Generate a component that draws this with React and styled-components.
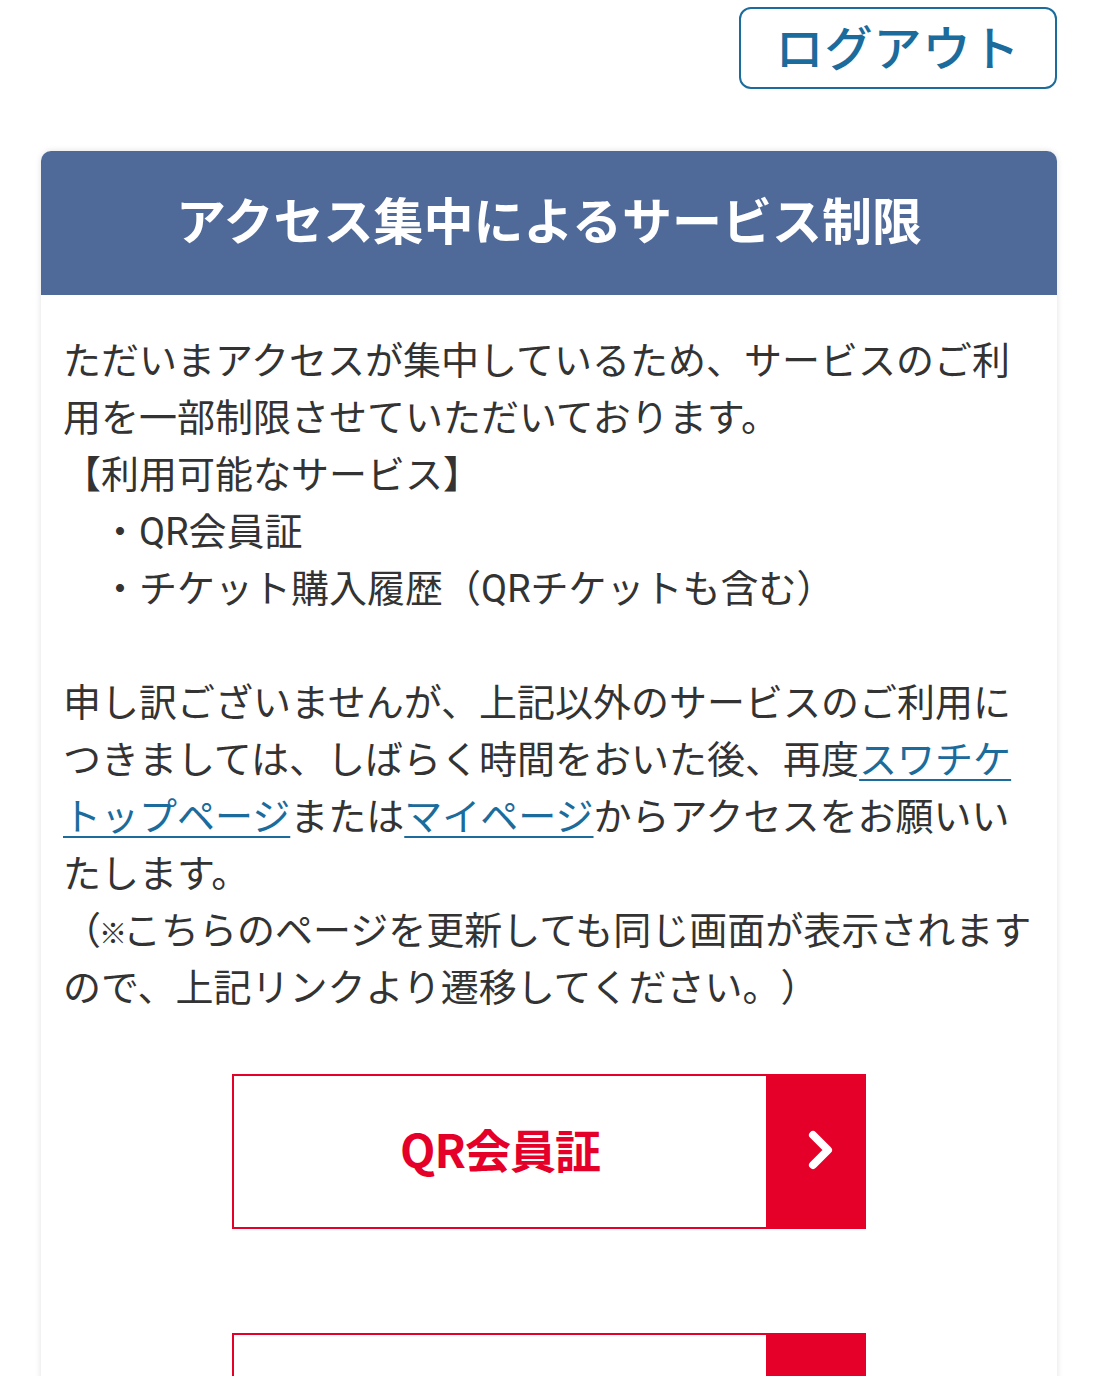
import React from 'react';
import styled, { createGlobalStyle } from 'styled-components';

const GlobalStyle = createGlobalStyle`
  * { box-sizing: border-box; }
  body {
    margin: 0;
    background: #fff;
    font-family: Roboto, "Noto Sans CJK JP", sans-serif;
    color: #333;
  }
`

const Page = styled.div`
  padding: 7px 39px 0 41px;
  height: 1376px;
  overflow: hidden;
`

const TopBar = styled.div`
  display: flex;
  justify-content: flex-end;
`

const LogoutButton = styled.button`
  width: 318px;
  height: 82px;
  padding: 0 0 6px;
  border: 2px solid #1b6c9c;
  border-radius: 12px;
  background: #fff;
  color: #1b6c9c;
  font-family: "Noto Sans CJK JP", sans-serif;
  font-size: 48px;
  font-weight: 500;
  letter-spacing: 1px;
  cursor: pointer;
`

const Card = styled.section`
  margin-top: 62px;
  background: #fff;
  border-radius: 10px 10px 0 0;
  box-shadow: 0 0 6px rgba(0, 0, 0, 0.12);
`

const CardHeader = styled.h1`
  margin: 0;
  height: 144px;
  display: flex;
  align-items: center;
  justify-content: center;
  padding-bottom: 10px;
  background: #4f6a98;
  border-radius: 10px 10px 0 0;
  color: #fff;
  font-family: "Noto Sans CJK JP", sans-serif;
  font-size: 50px;
  font-weight: 700;
`

const CardBody = styled.div`
  padding: 38px 22px 80px;
`

const Text = styled.p`
  margin: 0;
  font-family: Roboto, "Noto Sans CJK JP", sans-serif;
  font-size: 38px;
  line-height: 57px;
  white-space: nowrap;
  text-spacing-trim: space-all;
`

const RefMark = styled.span`
  font-size: 28px;
  line-height: 0;
  letter-spacing: -4px;
  margin-left: -2px;
`

const Gap = styled.div`
  height: 57px;
`

const Link = styled.a`
  color: #1b6c9c;
  text-decoration: underline;
  text-underline-offset: 6px;
  text-decoration-thickness: 2px;
`

const Buttons = styled.div`
  margin-top: 57px;
  display: flex;
  flex-direction: column;
  align-items: center;
  gap: 104px;
`

const RedButton = styled.a`
  width: 634px;
  height: 155px;
  display: flex;
  border: 2px solid #e5002a;
  background: #fff;
  text-decoration: none;
  cursor: pointer;
`

const RedLabel = styled.span`
  flex: 1;
  display: flex;
  align-items: center;
  justify-content: center;
  padding-bottom: 8px;
  color: #e5002a;
  font-family: "Noto Sans CJK JP", sans-serif;
  font-size: 46px;
  font-weight: 700;
  letter-spacing: -1px;
`

const RedArrow = styled.span`
  width: 100px;
  margin: -2px -2px -2px 0;
  padding: 0 0 4px 10px;
  display: flex;
  align-items: center;
  justify-content: center;
  background: #e5002a;
`

const Chevron = () => (
  <svg width="30" height="42" viewBox="0 0 30 42">
    <path d="M7 6 L22 21 L7 36" fill="none" stroke="#fff" strokeWidth="8" strokeLinecap="round" strokeLinejoin="round" />
  </svg>
)

const IDEO = '\u3000';

const App = () => (
  <>
    <GlobalStyle />
    <Page>
      <TopBar>
        <LogoutButton>ログアウト</LogoutButton>
      </TopBar>
      <Card>
        <CardHeader>アクセス集中によるサービス制限</CardHeader>
        <CardBody>
          <Text>
            ただいまアクセスが集中しているため、サービスのご利<br />
            用を一部制限させていただいております。<br />
            【利用可能なサービス】<br />
            {IDEO}・QR会員証<br />
            {IDEO}・チケット購入履歴（QRチケットも含む）
          </Text>
          <Gap />
          <Text>
            申し訳ございませんが、上記以外のサービスのご利用に<br />
            つきましては、しばらく時間をおいた後、再度<Link>スワチケ<br />
            トップページ</Link>または<Link>マイページ</Link>からアクセスをお願いい<br />
            たします。<br />
            （<RefMark>※</RefMark>こちらのページを更新しても同じ画面が表示されます<br />
            ので、上記リンクより遷移してください。）
          </Text>
          <Buttons>
            <RedButton>
              <RedLabel>QR会員証</RedLabel>
              <RedArrow><Chevron /></RedArrow>
            </RedButton>
            <RedButton>
              <RedLabel>チケット購入履歴</RedLabel>
              <RedArrow><Chevron /></RedArrow>
            </RedButton>
          </Buttons>
        </CardBody>
      </Card>
    </Page>
  </>
);

export default App;
